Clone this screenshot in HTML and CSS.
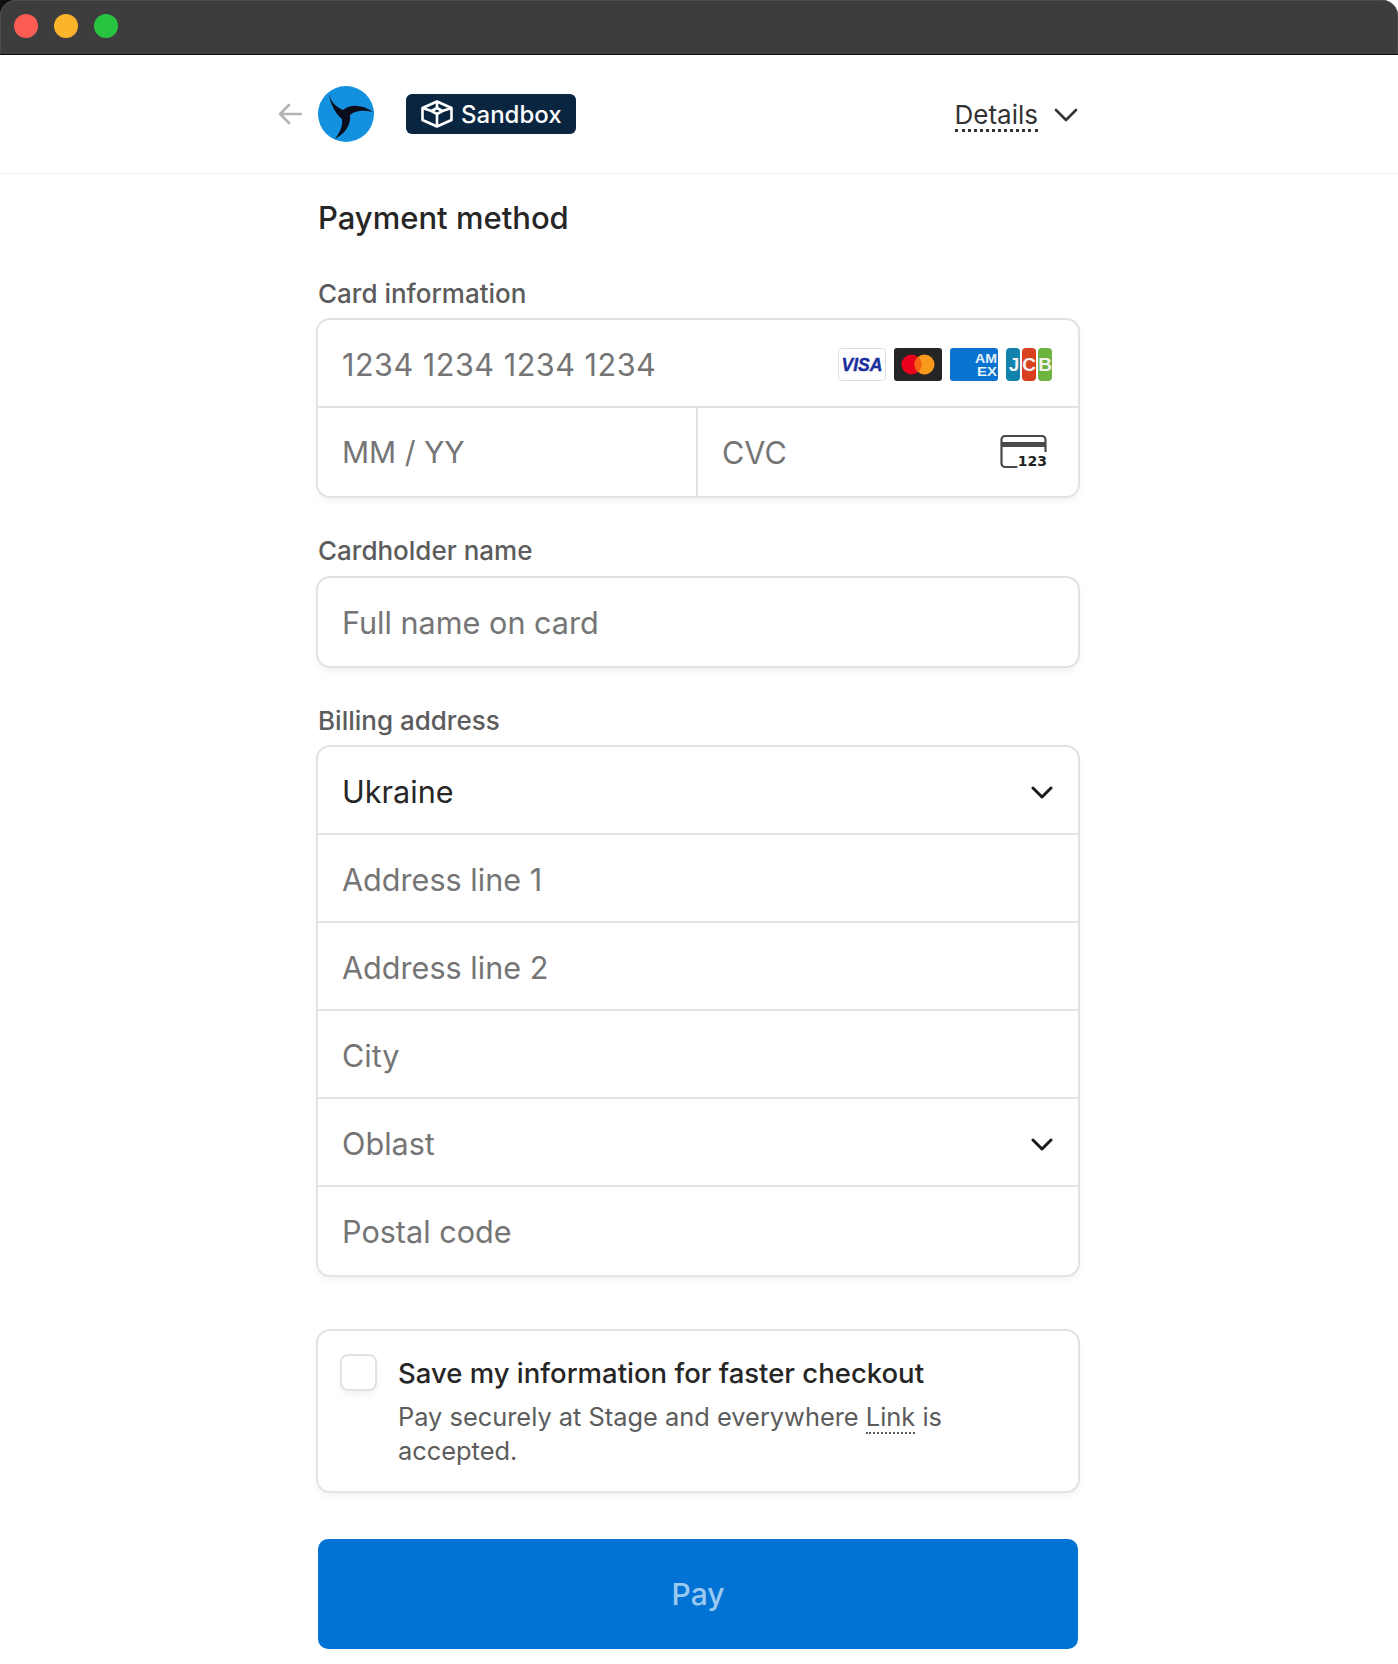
FILE: index.html
```html
<!DOCTYPE html>
<html lang="en">
<head>
  <meta charset="UTF-8">
  <meta name="viewport" content="width=device-width, initial-scale=1.0">
  <link rel="stylesheet" href="styles.css">
  <title>Payment method</title>
</head>
<body>
  <div id="window">
    <div class="titleBack">
      <div class="titleBar">
        <span class="dot red"></span>
        <span class="dot yellow"></span>
        <span class="dot green"></span>
      </div>
    </div>

    <header class="topBar">
      <div class="topInner">
        <svg class="backArrow" viewBox="0 0 24 22" fill="none" stroke="#b4b4b4" stroke-width="2.6" stroke-linecap="round" stroke-linejoin="round">
          <path d="M23 11H2M11 2l-9 9 9 9"/>
        </svg>
        <svg class="logo" viewBox="0 0 56 56">
          <circle cx="28" cy="28" r="28" fill="#1390de"/>
          <path fill="#0b0d1c" d="M11 8C13 16 18 21 25 24 32 18 44 18 55 26 46 24 38 24 32 29 33 38 28 47 17 53 22 46 25 40 24 33 18 28 12 18 11 8z"/>
        </svg>
        <div class="badge">
          <svg class="badgeIcon" viewBox="0 0 32 28" fill="none" stroke="#fff" stroke-width="2.600" stroke-linejoin="round">
            <path d="M16 1.500 30.500 8v12L16 26.500 1.500 20V8z"/>
            <path d="M16 8l5.500 3-5.500 3-5.500-3zM16 1.500V8M1.500 8l9 3M30.500 8l-9 3M16 14v12.500"/>
          </svg>
          <span>Sandbox</span>
        </div>
        <div class="details">
          <span class="detailsText">Details</span>
          <svg class="detailsChevron" viewBox="0 0 24 14" fill="none" stroke="#333" stroke-width="2.600" stroke-linecap="round" stroke-linejoin="round">
            <path d="M2 2l10 10L22 2"/>
          </svg>
        </div>
      </div>
    </header>

    <main class="form">
      <h1 class="formTitle">Payment method</h1>

      <div class="fieldLabel firstLabel">Card information</div>
      <div class="box">
        <div class="row">
          <span class="placeholder cardNumber">1234 1234 1234 1234</span>
          <div class="brands">
            <svg class="brand" viewBox="0 0 48 33">
              <rect x=".5" y=".5" width="47" height="32" rx="3" fill="#fff" stroke="#dcdfe6"/>
              <text x="24" y="23" text-anchor="middle" textLength="41" lengthAdjust="spacingAndGlyphs" class="visaText">VISA</text>
            </svg>
            <svg class="brand" viewBox="0 0 48 33">
              <rect width="48" height="33" rx="3" fill="#252525"/>
              <circle cx="17.500" cy="16.500" r="10" fill="#e8001c"/>
              <circle cx="30.500" cy="16.500" r="10" fill="#f99a1c"/>
              <path d="M24 8.900a10 10 0 0 1 0 15.200 10 10 0 0 1 0-15.200z" fill="#f4600f"/>
            </svg>
            <svg class="brand" viewBox="0 0 48 33">
              <rect width="48" height="33" rx="3" fill="#0a73d0"/>
              <text x="25" y="15" textLength="22" lengthAdjust="spacingAndGlyphs" class="amexText">AM</text>
              <text x="27" y="28" textLength="20" lengthAdjust="spacingAndGlyphs" class="amexText">EX</text>
            </svg>
            <svg class="brand" viewBox="0 0 46 33">
              <rect width="14" height="33" rx="4" fill="#1183ad"/>
              <rect x="16" width="14" height="33" rx="4" fill="#d8401f"/>
              <rect x="32" width="14" height="33" rx="4" fill="#6cb33f"/>
              <text x="8" y="23" text-anchor="middle" class="jcbText">J</text>
              <text x="23" y="23" text-anchor="middle" class="jcbText">C</text>
              <text x="39" y="23" text-anchor="middle" class="jcbText">B</text>
            </svg>
          </div>
        </div>
        <div class="split">
          <div class="row">
            <span class="placeholder expiry">MM / YY</span>
          </div>
          <div class="row cvcCell">
            <span class="placeholder">CVC</span>
            <svg class="cvcIcon" viewBox="0 0 47 36" fill="none">
              <path d="M20 33H5a3.500 3.500 0 0 1-3.500-3.500v-24A3.500 3.500 0 0 1 5 2h37a3.500 3.500 0 0 1 3.500 3.500V18" stroke="#4a4a4a" stroke-width="2.200"/>
              <rect x="1" y="8" width="45" height="5" fill="#4a4a4a"/>
              <text x="47" y="32" text-anchor="end" class="cvcText">123</text>
            </svg>
          </div>
        </div>
      </div>

      <div class="fieldLabel nameLabel">Cardholder name</div>
      <div class="box single">
        <div class="row">
          <span class="placeholder">Full name on card</span>
        </div>
      </div>

      <div class="fieldLabel">Billing address</div>
      <div class="box">
        <div class="row">
          <span class="value">Ukraine</span>
          <svg class="selectChevron" viewBox="0 0 22 13" fill="none" stroke="#1a1a1a" stroke-width="3" stroke-linecap="round" stroke-linejoin="round"><path d="M2 2l9 9 9-9"/></svg>
        </div>
        <div class="row"><span class="placeholder">Address line 1</span></div>
        <div class="row"><span class="placeholder">Address line 2</span></div>
        <div class="row"><span class="placeholder">City</span></div>
        <div class="row">
          <span class="placeholder">Oblast</span>
          <svg class="selectChevron" viewBox="0 0 22 13" fill="none" stroke="#1a1a1a" stroke-width="3" stroke-linecap="round" stroke-linejoin="round"><path d="M2 2l9 9 9-9"/></svg>
        </div>
        <div class="row"><span class="placeholder">Postal code</span></div>
      </div>

      <div class="box saveBox">
        <span class="checkbox"></span>
        <div class="saveText">
          <div class="saveTitle">Save my information for faster checkout</div>
          <p class="saveDesc">Pay securely at Stage and everywhere <span class="linkWord">Link</span> is<br>accepted.</p>
        </div>
      </div>

      <button class="payBtn" type="button">Pay</button>
    </main>
  </div>
</body>
</html>
```

FILE: styles.css
```css
* { box-sizing: border-box; }
html, body { margin: 0; height: 100%; background-color: #fff; }
body {
  font-family: Inter, "Liberation Sans", sans-serif;
  color: #1a1a1a;
  overflow: hidden;
}
#window {
  height: 1664px;
  background-color: #fff;
}

/* title bar */
.titleBack {
  background: linear-gradient(90deg, #111 50%, #fff 50%);
}
.titleBar {
  display: flex;
  align-items: center;
  gap: 16px;
  height: 55px;
  padding: 0 14px 3px;
  border-bottom: 1px solid #111;
  border-radius: 16px 16px 0 0;
  background-color: #3d3d3d;
  box-shadow: inset 0 1px 0 #4d4d4d, inset -1px 0 0 #4d4d4d, inset 1px 0 0 #4d4d4d;
}
.dot { width: 24px; height: 24px; border-radius: 50%; }
.red { background-color: #fd5c54; }
.yellow { background-color: #fdb42d; }
.green { background-color: #27c43f; }

/* top bar */
.topBar {
  height: 119px;
  border-bottom: 1px solid #efefef;
}
.topInner {
  position: relative;
  display: flex;
  align-items: center;
  width: 760px;
  height: 100%;
  margin-left: 318px;
}
.backArrow {
  position: absolute;
  left: -40px;
  width: 24px;
  height: 22px;
}
.logo { width: 56px; height: 56px; }
.badge {
  display: flex;
  align-items: center;
  gap: 8px;
  height: 40px;
  margin-left: 32px;
  padding: 0 14px 0 15px;
  border-radius: 6px;
  font-size: 24px;
  font-weight: 500;
  color: #fff;
  background-color: #0a2540;
}
.badgeIcon { width: 32px; height: 28px; }
.details {
  display: flex;
  align-items: center;
  gap: 16px;
  margin-left: auto;
  font-size: 26px;
  color: #333;
}
.detailsText {
  margin-top: 3px;
  line-height: 29px;
  border-bottom: 3px dotted #333;
}
.detailsChevron { width: 24px; height: 14px; margin-top: 2px; }

/* form */
.form {
  width: 760px;
  margin-left: 318px;
}
.formTitle {
  margin: 0;
  padding-top: 24px;
  font-size: 31px;
  line-height: 40px;
  font-weight: 450;
  color: #262626;
}
.fieldLabel {
  margin-top: 39px;
  margin-bottom: 10px;
  font-size: 26px;
  line-height: 32px;
  font-weight: 450;
  color: #5c5c5c;
}
.firstLabel { margin-top: 40px; }
.nameLabel { margin-bottom: 11px; }
.box {
  border-radius: 12px;
  background-color: #fff;
  box-shadow: 0 0 0 2px #e2e2e2, 0 4px 8px rgba(0, 0, 0, .07);
}
.row {
  display: flex;
  align-items: center;
  justify-content: space-between;
  height: 88px;
  padding: 2px 24px 0;
  font-size: 30.6px;
  border-top: 2px solid #e2e2e2;
}
.row:first-child { border-top: 0; height: 86px; }
.row:last-child { height: 90px; padding-top: 0; }
.single .row:first-child { height: 88px; }
.split {
  display: grid;
  grid-template-columns: 378px 1fr;
}
.split .row { border-top: 2px solid #e2e2e2; height: 90px; padding-top: 0; }
.cvcCell { border-left: 2px solid #e2e2e2; padding-right: 31px; }
.placeholder { color: #757575; }
.cardNumber { letter-spacing: .5px; }
.expiry { font-size: 30px; }
.value { color: #262626; }

/* card logos */
.brands { display: flex; gap: 8px; margin-right: 2px; }
.brand { width: 48px; height: 33px; }
.brand:last-child { width: 46px; }
.visaText {
  font-family: "Liberation Sans", sans-serif;
  font-size: 18px;
  font-weight: 700;
  font-style: italic;
  fill: #1a2f9c;
  stroke: #1a2f9c;
  stroke-width: .4px;
}
.amexText {
  font-family: "Liberation Sans", sans-serif;
  font-size: 13px;
  font-weight: 700;
  fill: #e6f1fb;
}
.jcbText {
  font-family: "Liberation Sans", sans-serif;
  font-size: 19px;
  font-weight: 700;
  fill: #f2f2f2;
}
.cvcIcon { width: 47px; height: 36px; }
.cvcText {
  font-family: "DejaVu Sans", sans-serif;
  font-size: 14px;
  font-weight: 700;
  fill: #222;
  stroke: #fff;
  stroke-width: 4px;
  paint-order: stroke;
}
.selectChevron { width: 22px; height: 13px; margin: 2px 1px 0 0; }

/* save box */
.saveBox {
  display: flex;
  gap: 23px;
  height: 160px;
  margin-top: 56px;
  padding: 25px 24px 0;
}
.checkbox {
  flex: none;
  width: 33px;
  height: 33px;
  border-radius: 6px;
  background-color: #fff;
  box-shadow: 0 0 0 2px #e2e2e2, 0 4px 8px rgba(0, 0, 0, .08);
}
.saveText { margin-top: -1px; }
.saveTitle {
  font-size: 27.5px;
  line-height: 36px;
  font-weight: 450;
  color: #262626;
}
.saveDesc {
  margin: 9px 0 0;
  font-size: 25.4px;
  line-height: 34px;
  color: #5c5c5c;
}
.linkWord { border-bottom: 2px dotted #5c5c5c; }

.payBtn {
  display: block;
  width: 100%;
  height: 110px;
  margin-top: 48px;
  border: 0;
  border-radius: 10px;
  font-family: inherit;
  font-size: 30px;
  font-weight: 500;
  color: #9cc9f0;
  background-color: #0073d4;
}
```
